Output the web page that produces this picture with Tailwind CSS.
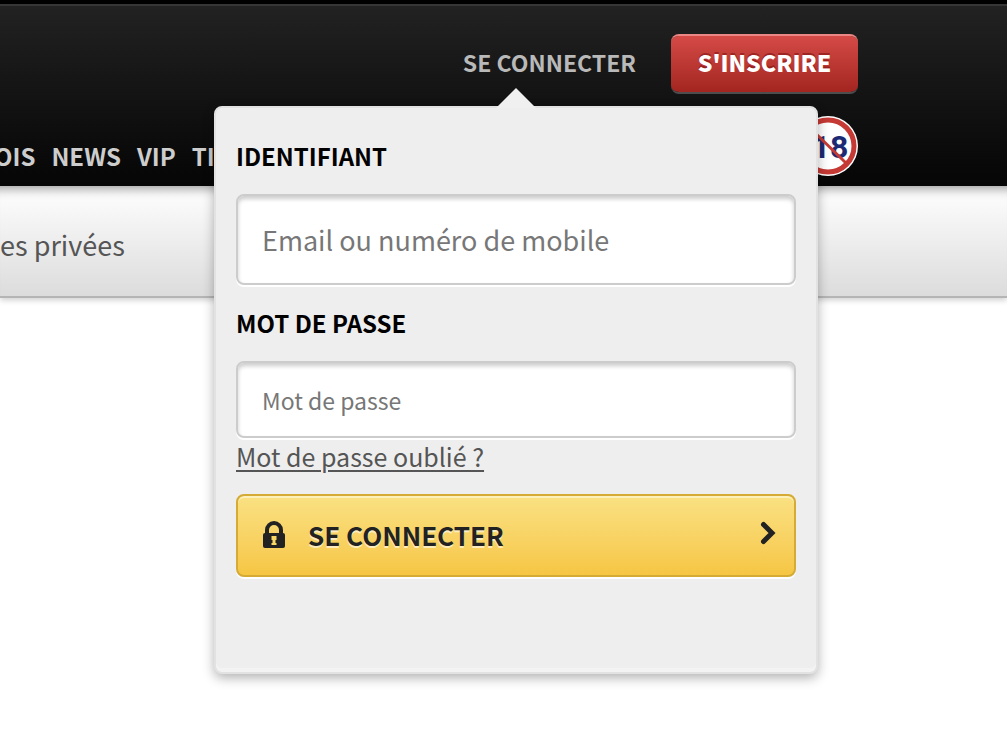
<!DOCTYPE html>
<html lang="fr">
<head>
  <meta charset="UTF-8" />
  <meta name="viewport" content="width=device-width, initial-scale=1.0">
  <title>Se connecter</title>
  <script src="https://cdn.jsdelivr.net/npm/@tailwindcss/browser@4"></script>
</head>
<body class="min-h-screen overflow-x-hidden bg-white font-['Noto_Sans_CJK_JP','Noto_Sans',sans-serif]">

  <header class="relative z-10 border-t-4 border-black bg-black">
    <div class="border-t-2 border-[#363636] bg-linear-to-b from-[#222222] to-[#060606] pt-7 pb-[10px] pr-[149px]">
      <div class="relative">
        <!-- Account links -->
        <div class="flex h-[60px] items-center justify-end gap-[35px]">
          <a href="#login" class="pb-1 text-[23px] leading-8 font-bold text-[#b9b9b9]">SE CONNECTER</a>
          <a href="#register" class="flex h-[60px] w-[187px] items-center justify-center rounded-lg border-t-2 border-b-2 border-t-[#ea8684] border-b-[#4d4d4d] bg-linear-to-b from-[#d54a46] to-[#a32520] bg-clip-padding pb-1 text-[23px] leading-8 font-black text-white text-shadow-[0_-2px_0_rgba(130,20,20,0.6)]">S'INSCRIRE</a>
        </div>

        <!-- Main nav -->
        <div class="mt-[22px] flex h-[60px] items-center justify-between">
          <nav class="-ml-[6px] mt-5 flex gap-4 text-2xl leading-8 font-bold text-[#cdcdcd]">
            <a href="#">OIS</a>
            <a href="#">NEWS</a>
            <a href="#">VIP</a>
            <a href="#">TI</a>
          </nav>
          <svg class="size-[60px]" viewBox="0 0 60 60" role="img" aria-label="Interdit aux moins de 18 ans">
            <circle cx="30" cy="30" r="30" fill="#ffffff" />
            <circle cx="30" cy="30" r="26" fill="#ffffff" stroke="#c53a35" stroke-width="5" />
            <text x="32" y="42" text-anchor="middle" font-family="Roboto, sans-serif" font-size="32" font-weight="700" fill="#1c2a74">18</text>
            <path d="M10 10 49 48" stroke="#c53a35" stroke-width="3" />
          </svg>
        </div>

        <!-- Login popover -->
        <section id="login" class="absolute top-[72px] right-10 w-[604px] rounded-lg border-2 border-[#e2e2e2] bg-[#eeeeee] px-5 pt-[30px] pb-[95px] shadow-[inset_0_-4px_0_#f3f3f3,0_4px_12px_rgba(0,0,0,0.3)]">
          <svg class="absolute -top-5 left-1/2 h-5 w-10 -translate-x-1/2" viewBox="0 0 40 20" aria-hidden="true">
            <path d="M20 0 40 20H0Z" fill="#f0f0f0" />
          </svg>
          <form>
            <label for="identifiant" class="block text-2xl leading-9 font-bold text-black">IDENTIFIANT</label>
            <input id="identifiant" type="text" placeholder="Email ou numéro de mobile" class="mt-5 block h-[91px] w-full rounded-lg border-2 border-[#cccccc] bg-white px-6 text-[27px] text-[#333333] shadow-[inset_0_3px_4px_#cccccc,0_2px_0_#ffffff] placeholder:text-[#777777]">
            <label for="motdepasse" class="mt-5 block text-2xl leading-9 font-bold text-black">MOT DE PASSE</label>
            <input id="motdepasse" type="password" placeholder="Mot de passe" class="mt-5 block h-[77px] w-full rounded-lg border-2 border-[#cccccc] bg-white px-6 text-[23px] text-[#333333] shadow-[inset_0_3px_4px_#cccccc,0_2px_0_#ffffff] placeholder:text-[#777777]">
            <a href="#" class="block text-[25px] leading-9 text-[#555555] underline decoration-2 underline-offset-3">Mot de passe oublié ?</a>
            <button type="submit" class="mt-5 flex h-[83px] w-full items-center rounded-lg border-2 border-[#d5ab35] bg-linear-to-b from-[#fae182] to-[#f6c643] pr-[18px] pb-[2px] pl-6 text-[26px] leading-9 font-bold text-[#222222] shadow-[inset_0_2px_0_#fdf0b8,0_2px_0_#ffffff] text-shadow-[0_2px_0_rgba(255,255,255,0.6)]">
              <svg class="h-[27px] w-6" viewBox="0 0 24 27" fill="none" aria-hidden="true">
                <path d="M5 14V9a7 7 0 0 1 14 0v5" stroke="#222222" stroke-width="4" />
                <rect x="1" y="12" width="22" height="15" rx="2" fill="#222222" />
                <path d="M9.500 15h5v4h-1v3h1v2h-5v-2h1v-3h-1Z" fill="#f8d765" />
              </svg>
              <span class="ml-[22px]">SE CONNECTER</span>
              <svg class="mb-1 ml-auto h-6 w-4" viewBox="0 0 16 24" fill="none" aria-hidden="true">
                <path d="M3.500 3.500 12 12l-8.500 8.500" stroke="#222222" stroke-width="5" stroke-linecap="round" />
              </svg>
            </button>
          </form>
        </section>
      </div>
    </div>
  </header>

  <!-- Sub nav -->
  <nav class="flex h-[112px] items-center border-b-2 border-[#b5b5b5] bg-linear-to-b from-[#ffffff] to-[#dcdcdc] pt-2 shadow-[inset_0_14px_12px_-12px_rgba(0,0,0,0.45),0_2px_6px_rgba(0,0,0,0.2)]">
    <a href="#" class="text-[27px] leading-9 text-[#555555]">es privées</a>
  </nav>

</body>
</html>
